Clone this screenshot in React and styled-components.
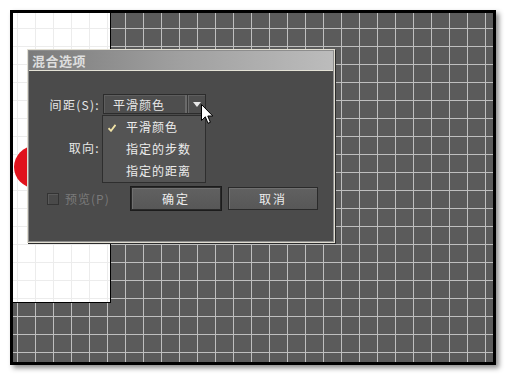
import styled, { createGlobalStyle } from "styled-components";

const GlobalStyle = createGlobalStyle`
  body {
    margin: 0;
    background: #ffffff;
    font-family: "Noto Sans CJK SC", "Noto Sans", sans-serif;
  }
`;

const options = ["平滑颜色", "指定的步数", "指定的距离"];

export default function App() {
  return (
    <>
      <GlobalStyle />
      <Page>
        <Frame>
          <Canvas>
            <Artboard>
              <RedDot />
            </Artboard>
            <Dialog>
              <TitleBar>混合选项</TitleBar>
              <Body>
                <Row>
                  <Label>间距(S):</Label>
                  <SelectWrap>
                    <Select>
                      <span>平滑颜色</span>
                      <ArrowBox>
                        <Arrow />
                      </ArrowBox>
                    </Select>
                    <Menu>
                      {options.map((o, i) => (
                        <MenuItem key={o}>
                          {i === 0 && (
                            <Check viewBox="0 0 8 8" width="8" height="8">
                              <path d="M0.5 4.2 L3 6.8 L7.5 0.8" fill="none" stroke="#f1e3a6" strokeWidth="1.8" />
                            </Check>
                          )}
                          {o}
                        </MenuItem>
                      ))}
                    </Menu>
                  </SelectWrap>
                </Row>
                <Row $top={23}>
                  <Label>取向:</Label>
                </Row>
                <Footer>
                  <Preview>
                    <CheckBox />
                    <span>预览(P)</span>
                  </Preview>
                  <Buttons>
                    <Button $default>确定</Button>
                    <Button>取消</Button>
                  </Buttons>
                </Footer>
              </Body>
              <Cursor viewBox="0 0 13 21" width="13" height="21">
                <path d="M0.5 0.5 L0.5 16.5 L4.3 12.8 L7 19.3 L9.4 18.3 L6.8 12 L11.8 12 Z" fill="#ffffff" stroke="#000000" strokeWidth="1" />
              </Cursor>
            </Dialog>
          </Canvas>
        </Frame>
      </Page>
    </>
  );
}

const Page = styled.div`
  padding: 10px;
`;

const Frame = styled.div`
  width: 480px;
  height: 349px;
  border: 3px solid #000;
  box-shadow: 3px 3px 5px rgba(0, 0, 0, 0.45);
`;

const Canvas = styled.div`
  position: relative;
  width: 100%;
  height: 100%;
  overflow: hidden;
  background-color: #5b5b5b;
  background-image: linear-gradient(to right, #bfbfbf 1px, transparent 1px),
    linear-gradient(to bottom, #bfbfbf 1px, transparent 1px);
  background-size: 18px 18px;
  background-position: 4px 15px;
`;

const Artboard = styled.div`
  position: relative;
  width: 97px;
  height: 289px;
  border-right: 1px solid #000;
  border-bottom: 1px solid #000;
  background-color: #ffffff;
  background-image: linear-gradient(to right, #ececec 1px, transparent 1px),
    linear-gradient(to bottom, #ececec 1px, transparent 1px);
  background-size: 18px 18px;
  background-position: 4px 15px;
`;

const RedDot = styled.div`
  position: absolute;
  left: 1px;
  top: 133px;
  width: 42px;
  height: 42px;
  border-radius: 50%;
  background: #e0121c;
`;

const Dialog = styled.div`
  position: absolute;
  left: 14px;
  top: 36px;
  width: 308px;
  height: 194px;
  box-sizing: border-box;
  border: 1px solid #e1ded2;
  padding: 1px;
  background: #8d8d8d;
  box-shadow: 1px 1px 0 #2c2c2c;
  display: flex;
  flex-direction: column;
`;

const TitleBar = styled.div`
  height: 19px;
  border-bottom: 1px solid #e3e1d5;
  background: linear-gradient(to right, #7b7b7b, #a0a0a0 50%, #bcbcbc);
  color: #dedede;
  font-size: 13px;
  font-weight: 700;
  line-height: 19px;
  padding-left: 3px;
  letter-spacing: 0.5px;
`;

const Body = styled.div`
  flex: 1;
  background: #4b4b4b;
  padding-top: 23px;
  display: flex;
  flex-direction: column;
  color: #e6e6e6;
  font-size: 12px;
`;

const Row = styled.div`
  display: flex;
  align-items: center;
  gap: 3px;
  height: 20px;
  margin-top: ${({ $top }) => ($top ? `${$top}px` : "0")};
`;

const Label = styled.div`
  width: 71px;
  text-align: right;
  letter-spacing: 1.3px;
`;

const SelectWrap = styled.div`
  position: relative;
  z-index: 2;
`;

const Select = styled.div`
  width: 103px;
  height: 20px;
  box-sizing: border-box;
  border: 1px solid #2c2c2c;
  box-shadow: inset 1px 1px 0 #5e5e5e;
  background: #4e4e4e;
  display: flex;
  align-items: center;
  padding-left: 9px;
  letter-spacing: 1px;
  span {
    flex: 1;
  }
`;

const ArrowBox = styled.div`
  width: 17px;
  height: 18px;
  border-left: 1px solid #3a3a3a;
  box-shadow: inset 1px 0 0 #6a6a6a, -2px 0 0 #6a6a6a;
  display: flex;
  align-items: center;
  justify-content: center;
`;

const Arrow = styled.div`
  width: 0;
  height: 0;
  border-left: 4px solid transparent;
  border-right: 4px solid transparent;
  border-top: 5px solid #e8e8e8;
  margin-top: 1px;
`;

const Menu = styled.div`
  position: absolute;
  left: -1px;
  top: 21px;
  width: 104px;
  box-sizing: border-box;
  border: 1px solid #2e2e2e;
  background: #545454;
`;

const MenuItem = styled.div`
  position: relative;
  height: 22px;
  line-height: 22px;
  padding-left: 23px;
  letter-spacing: 1px;
  color: #ececec;
`;

const Check = styled.svg`
  position: absolute;
  left: 5px;
  top: 8px;
`;

const Footer = styled.div`
  display: flex;
  align-items: center;
  margin-top: 30px;
  padding-left: 18px;
`;

const Preview = styled.div`
  width: 84px;
  display: flex;
  align-items: center;
  gap: 6px;
  color: #7a7a7a;
  letter-spacing: 1px;
`;

const CheckBox = styled.div`
  width: 12px;
  height: 12px;
  box-sizing: border-box;
  border: 1px solid #333;
  box-shadow: inset 1px 1px 0 #5a5a5a;
  background: #4a4a4a;
`;

const Buttons = styled.div`
  display: flex;
  gap: 7px;
`;

const Button = styled.button`
  width: 90px;
  height: 23px;
  box-sizing: border-box;
  border: 1px solid #2a2a2a;
  background: linear-gradient(to bottom, #616161, #575757);
  box-shadow: inset 1px 1px 0 #707070
    ${({ $default }) => ($default ? ", 0 0 0 1px #1c1c1c" : "")};
  color: #ececec;
  font-family: "Noto Sans CJK SC", sans-serif;
  font-size: 12px;
  letter-spacing: 2px;
  padding: 0;
`;

const Cursor = styled.svg`
  position: absolute;
  left: 173px;
  top: 54px;
  z-index: 3;
`;
